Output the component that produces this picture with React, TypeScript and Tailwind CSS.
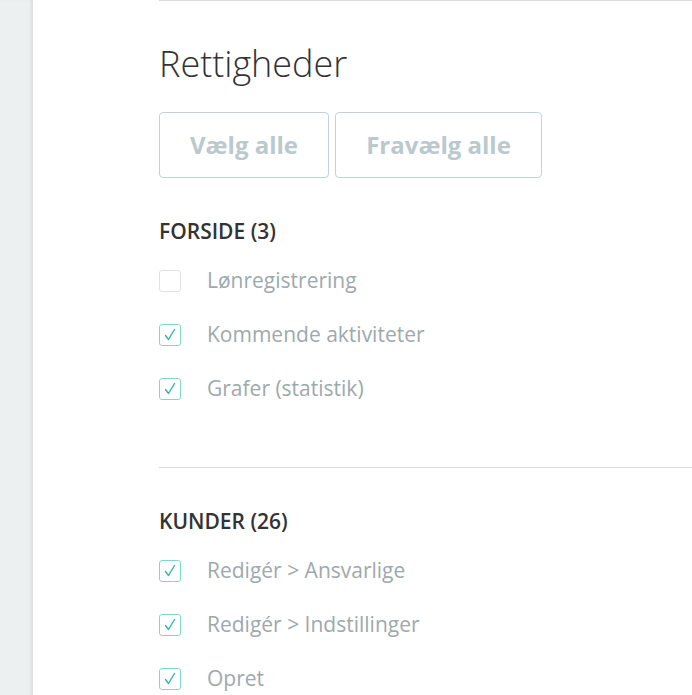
import React from 'react';

type Perm = { label: string; checked: boolean };

const sections: { title: string; items: Perm[] }[] = [
  {
    title: 'FORSIDE (3)',
    items: [
      { label: 'Lønregistrering', checked: false },
      { label: 'Kommende aktiviteter', checked: true },
      { label: 'Grafer (statistik)', checked: true },
    ],
  },
  {
    title: 'KUNDER (26)',
    items: [
      { label: 'Redigér > Ansvarlige', checked: true },
      { label: 'Redigér > Indstillinger', checked: true },
      { label: 'Opret', checked: true },
    ],
  },
];

function Checkbox({ checked }: { checked: boolean }) {
  return (
    <span
      className={
        checked
          ? 'flex h-[22px] w-[22px] shrink-0 items-center justify-center rounded-[3px] border border-[#7fd9c9] text-[#2fb9a6]'
          : 'flex h-[22px] w-[22px] shrink-0 items-center justify-center rounded-[3px] border border-[#dfe3e4]'
      }
    >
      {checked && (
        <svg width="14" height="14" viewBox="0 0 14 14" fill="none">
          <path d="M2.5 7.5 L5.5 11.5 L11.5 1.5" stroke="currentColor" strokeWidth="1.4" strokeLinecap="round" strokeLinejoin="round" />
        </svg>
      )}
    </span>
  );
}

export default function App() {
  return (
    <div className="flex min-h-screen bg-white font-['Open_Sans',sans-serif]">
      <div className="w-[33px] shrink-0 bg-[#ecf0f1] shadow-[inset_-3px_0_3px_-1px_rgba(0,0,0,0.08)]" />
      <div className="flex-1 pl-[126px]">
        <div className="border-t border-[#dcdcdc]">
          <h1 className="mt-[41px] text-[36px] leading-[44px] font-light text-[#333]">Rettigheder</h1>
          <div className="mt-[26px] flex gap-[6px]">
            <button className="h-[66px] w-[170px] rounded-[4px] border border-[#c3d2d5] text-[24px] font-bold text-[#b9c9cd]">
              Vælg alle
            </button>
            <button className="h-[66px] w-[207px] rounded-[4px] border border-[#c3d2d5] text-[24px] font-bold text-[#b9c9cd]">
              Fravælg alle
            </button>
          </div>

          {sections.map((s, i) => (
            <div key={s.title} className={i > 0 ? 'mt-[51px] border-t border-[#dcdcdc] pt-[39px]' : 'mt-[39px]'}>
              <h2 className="text-[21px] leading-[28px] font-semibold text-[#333]">{s.title}</h2>
              <div className="mt-[9px] flex flex-col">
                {s.items.map((it) => (
                  <label key={it.label} className="flex h-[54px] items-center gap-[26px]">
                    <Checkbox checked={it.checked} />
                    <span className="text-[21px] text-[#9ea9ac]">{it.label}</span>
                  </label>
                ))}
              </div>
            </div>
          ))}
        </div>
      </div>
    </div>
  );
}
